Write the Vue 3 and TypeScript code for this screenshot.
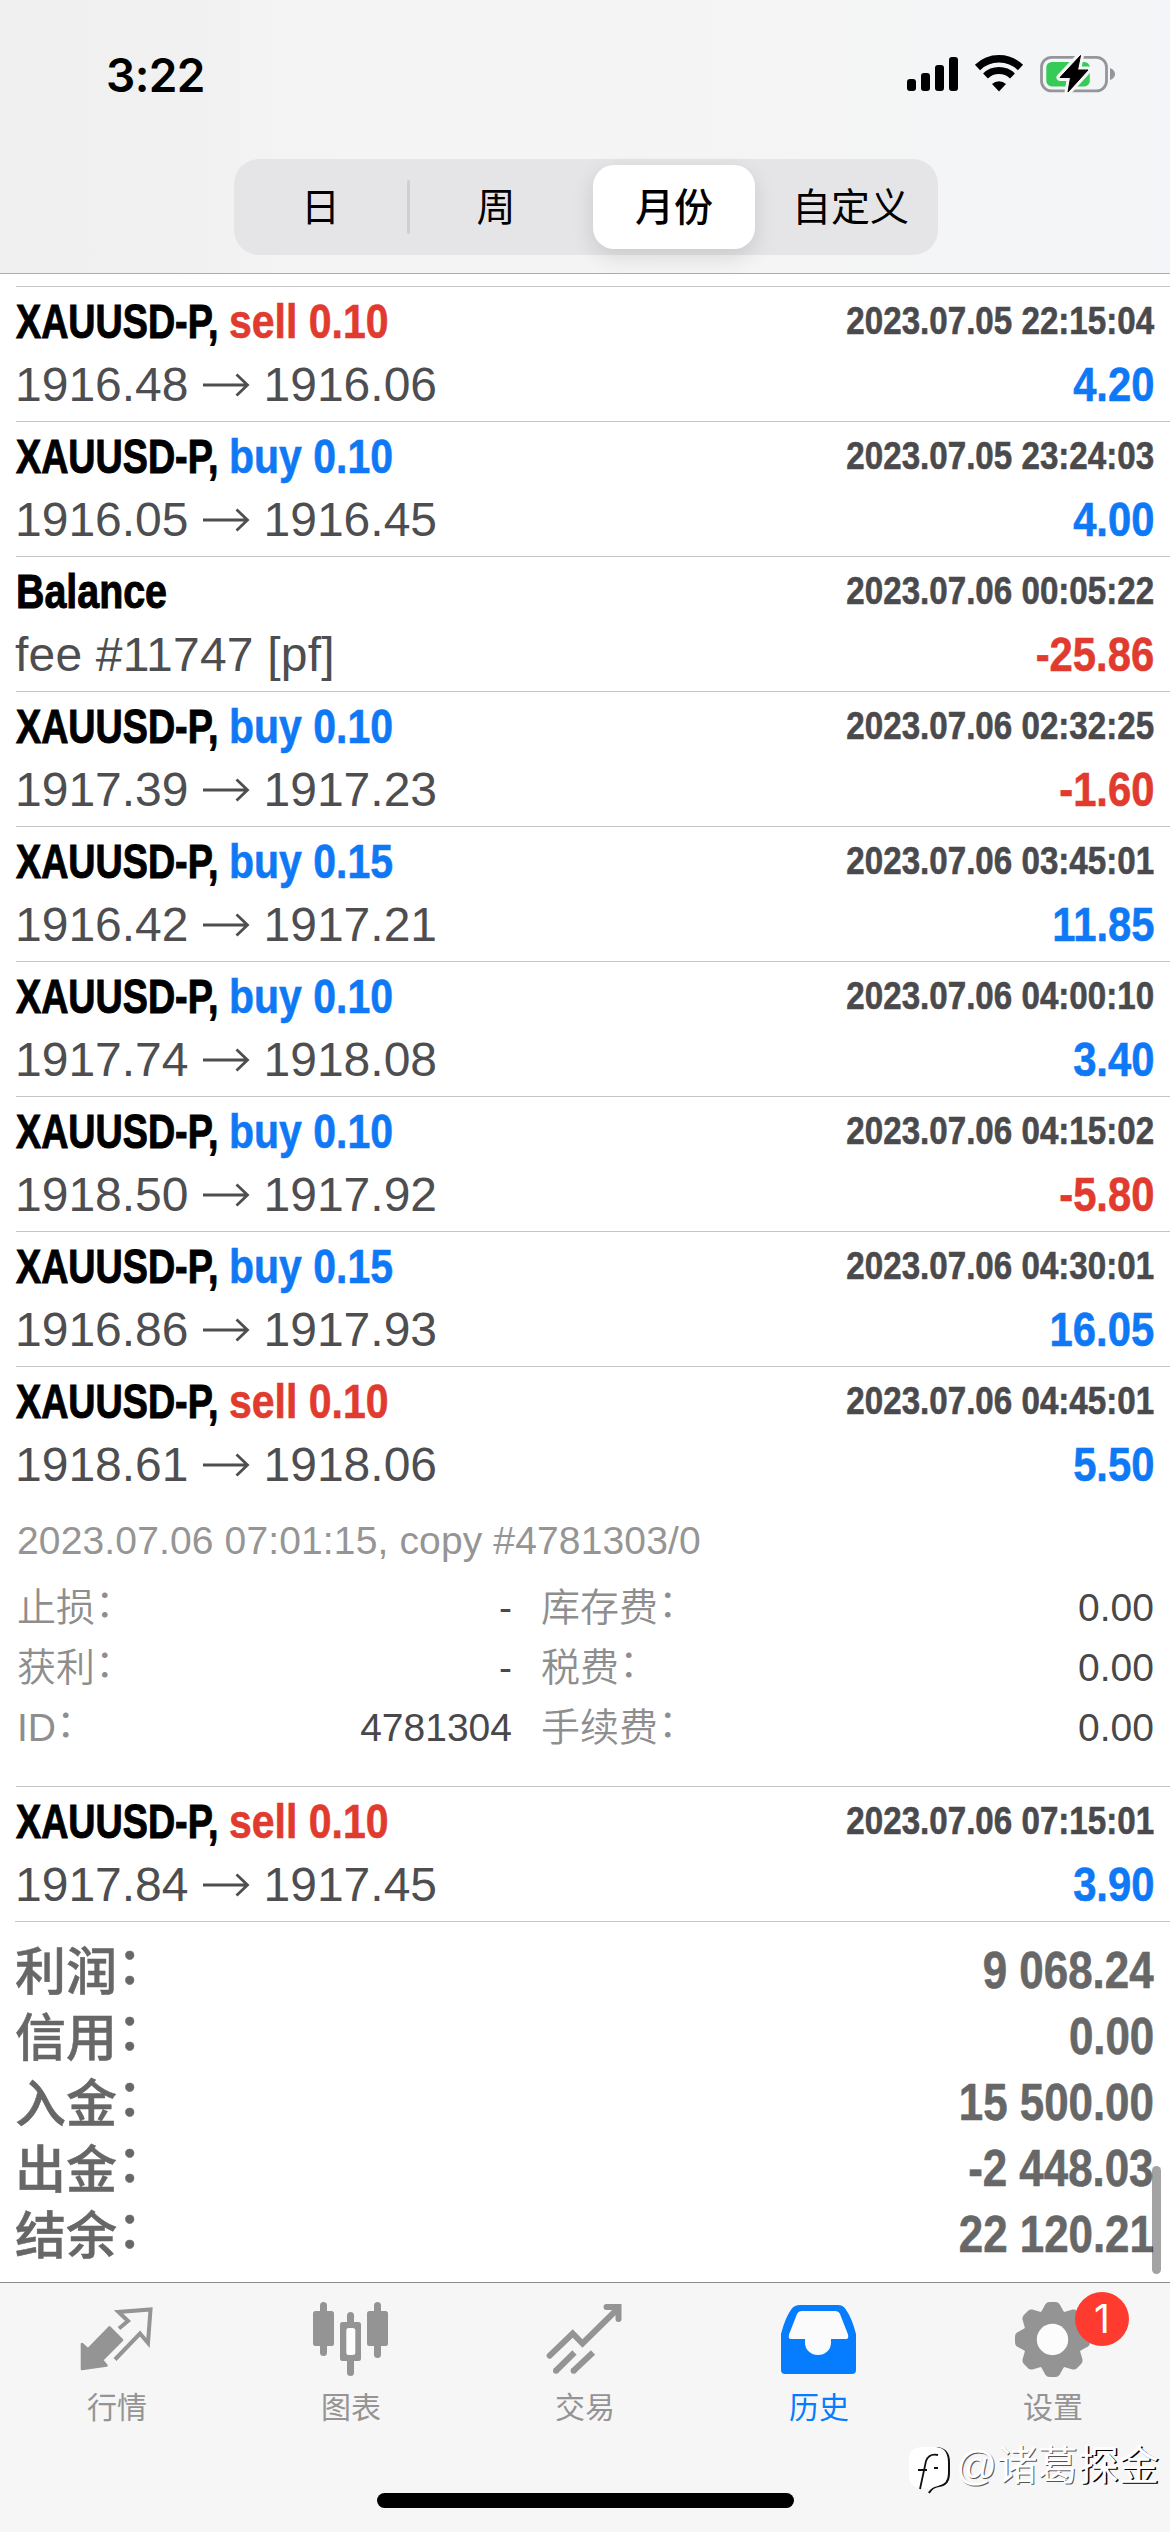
<script setup lang="ts">
type Side = 'buy' | 'sell'

interface Detail {
  note: string
  cells: { label: string; value: string }[]
}

interface Deal {
  symbol: string
  side?: Side
  volume?: string
  time: string
  open?: string
  close?: string
  comment?: string
  profit: string
  detail?: Detail
}

const periods = ['日', '周', '月份', '自定义']
const activePeriod = '月份'

const trade = (side: Side, volume: string, time: string, open: string, close: string, profit: string, detail?: Detail): Deal => ({
  symbol: 'XAUUSD-P,', side, volume, time, open, close, profit, detail,
})

const deals: Deal[] = [
  trade('sell', '0.10', '2023.07.05 22:15:04', '1916.48', '1916.06', '4.20'),
  trade('buy', '0.10', '2023.07.05 23:24:03', '1916.05', '1916.45', '4.00'),
  { symbol: 'Balance', time: '2023.07.06 00:05:22', comment: 'fee #11747 [pf]', profit: '-25.86' },
  trade('buy', '0.10', '2023.07.06 02:32:25', '1917.39', '1917.23', '-1.60'),
  trade('buy', '0.15', '2023.07.06 03:45:01', '1916.42', '1917.21', '11.85'),
  trade('buy', '0.10', '2023.07.06 04:00:10', '1917.74', '1918.08', '3.40'),
  trade('buy', '0.10', '2023.07.06 04:15:02', '1918.50', '1917.92', '-5.80'),
  trade('buy', '0.15', '2023.07.06 04:30:01', '1916.86', '1917.93', '16.05'),
  trade('sell', '0.10', '2023.07.06 04:45:01', '1918.61', '1918.06', '5.50', {
    note: '2023.07.06 07:01:15, copy #4781303/0',
    cells: [
      { label: '止损', value: '-' },
      { label: '库存费', value: '0.00' },
      { label: '获利', value: '-' },
      { label: '税费', value: '0.00' },
      { label: 'ID', value: '4781304' },
      { label: '手续费', value: '0.00' },
    ],
  }),
  trade('sell', '0.10', '2023.07.06 07:15:01', '1917.84', '1917.45', '3.90'),
]

const totals = [
  { label: '利润', value: '9 068.24' },
  { label: '信用', value: '0.00' },
  { label: '入金', value: '15 500.00' },
  { label: '出金', value: '-2 448.03' },
  { label: '结余', value: '22 120.21' },
]

const tabs = [
  { id: 'quotes', label: '行情' },
  { id: 'chart', label: '图表' },
  { id: 'trade', label: '交易' },
  { id: 'history', label: '历史' },
  { id: 'settings', label: '设置' },
]
const activeTab = 'history'
const gearTeeth = [0, 45, 90, 135, 180, 225, 270, 315]
</script>

<template>
  <div class="screen">
    <header class="top">
      <div class="status">
        <span class="clock">3:22</span>
        <svg class="status-icons" width="212" height="44" viewBox="0 0 212 44">
          <rect x="3" y="27" width="9" height="12" rx="3" />
          <rect x="17" y="21" width="9" height="18" rx="3" />
          <rect x="31" y="13" width="9" height="26" rx="3" />
          <rect x="45" y="5" width="9" height="34" rx="3" />
          <g fill="none" stroke="#000">
            <path d="M73.500 15.500a31 31 0 0 1 43 0" stroke-width="7.500" />
            <path d="M81.500 24a19.500 19.500 0 0 1 27 0" stroke-width="7" />
          </g>
          <path d="M95 39.500l-7-7.500a10.500 10.500 0 0 1 14 0z" />
          <rect x="137.500" y="5.300" width="65" height="33.600" rx="10" fill="none" stroke="#96969a" stroke-width="2.800" />
          <path d="M206 16q5 2 5 6t-5 6z" fill="#96969a" />
          <rect x="142.300" y="10" width="43.500" height="24.400" rx="5.500" fill="#35cb56" />
          <path d="M176.500 3.500l-20.500 22h10.500l-2.500 14.500 20-22h-10.500z" stroke="#f6f6f7" stroke-width="7" stroke-linejoin="round" />
          <path d="M176.500 3.500l-20.500 22h10.500l-2.500 14.500 20-22h-10.500z" stroke="#000" stroke-width="1" stroke-linejoin="round" />
        </svg>
      </div>
      <nav class="segments">
        <div v-for="p in periods" :key="p" class="segment" :class="{ active: p === activePeriod }">
          <span>{{ p }}</span>
        </div>
      </nav>
    </header>

    <main class="list">
      <article v-for="d in deals" :key="d.time" class="deal">
        <div class="line head">
          <div class="name">
            <span class="symbol cond" :class="{ plain: !d.side }">{{ d.symbol }}</span>
            <span v-if="d.side" class="action cond" :class="d.side">{{ d.side }} {{ d.volume }}</span>
          </div>
          <span class="time cond">{{ d.time }}</span>
        </div>
        <div class="line body">
          <span v-if="d.comment" class="prices comment">{{ d.comment }}</span>
          <span v-else class="prices">
            <span>{{ d.open }}</span>
            <svg class="arrow" width="48" height="24" viewBox="0 0 48 24">
              <path d="M1 12H45M34.500 1.500L45.500 12L34.500 22.500" fill="none" stroke="currentColor" stroke-width="2.800" />
            </svg>
            <span>{{ d.close }}</span>
          </span>
          <span class="profit cond" :class="d.profit.startsWith('-') ? 'sell' : 'buy'">{{ d.profit }}</span>
        </div>
        <div v-if="d.detail" class="detail">
          <p class="note">{{ d.detail.note }}</p>
          <dl class="cells">
            <div v-for="c in d.detail.cells" :key="c.label" class="cell">
              <dt>{{ c.label }}<span class="colon">：</span></dt>
              <dd>{{ c.value }}</dd>
            </div>
          </dl>
        </div>
      </article>

      <dl class="totals">
        <div v-for="t in totals" :key="t.label" class="total">
          <dt>{{ t.label }}<span class="colon">：</span></dt>
          <dd class="cond">{{ t.value }}</dd>
        </div>
      </dl>
      <div class="scrollbar"></div>
    </main>

    <footer class="tabbar">
      <nav class="tabs">
        <div v-for="t in tabs" :key="t.id" class="tab" :class="{ active: t.id === activeTab }">
          <svg v-if="t.id === 'quotes'" class="icon" viewBox="66.500 24 100 84">
            <path d="M118.500 58.500L127.500 51L118 42L150 39.500L147.500 73L139.500 63.500L114.500 89.500" fill="none" stroke="currentColor" stroke-width="4" />
            <path d="M109 57.500L121.500 70L101.500 90L106 95.500L81.500 99V74L87.500 79.500Z" fill="currentColor" stroke="currentColor" stroke-width="2.600" stroke-linejoin="round" />
          </svg>
          <svg v-else-if="t.id === 'chart'" class="icon" viewBox="301 24 100 84">
            <g fill="currentColor">
              <rect x="320" y="32" width="7" height="54" rx="3.500" />
              <rect x="313" y="41" width="21" height="35" rx="2.500" />
              <rect x="374" y="32" width="7" height="56" rx="3.500" />
              <rect x="367" y="41" width="21" height="35" rx="2.500" />
              <rect x="347" y="42" width="7" height="64" rx="3.500" />
              <rect x="340" y="52" width="21" height="39" rx="2.500" />
            </g>
            <rect x="346.300" y="58" width="9" height="27" rx="2.500" fill="#fdfdfd" />
          </svg>
          <svg v-else-if="t.id === 'trade'" class="icon" viewBox="535 24 100 84">
            <g fill="none" stroke="currentColor" stroke-width="6">
              <path d="M549.700 85.700L572.700 63.500L582.500 73.500L618 38.500" stroke-linejoin="miter" stroke-linecap="round" />
              <path d="M606.500 37H618.500V49" stroke-linejoin="miter" stroke-linecap="round" />
              <path d="M555.700 101L574.500 82.500" />
              <path d="M573.300 101L593 82.500" />
            </g>
            <circle cx="556" cy="100.700" r="3" fill="currentColor" />
            <circle cx="573.600" cy="100.700" r="3" fill="currentColor" />
          </svg>
          <svg v-else-if="t.id === 'history'" class="icon" viewBox="769 24 100 84">
            <path d="M800 35H838Q843 35 845.500 39Q852 48 856 64V100Q856 104 852 104H785Q781 104 781 100V64Q785 48 791.500 39Q794.500 35 800 35Z" fill="currentColor" />
            <path d="M802 41H835Q838.500 41 840 44L848 64.500Q849 69 846 69H831V73A13 12 0 0 1 805 73V69H791Q788 69 789 64.500L797 44Q798.500 41 802 41Z" fill="#fbfbfb" />
          </svg>
          <svg v-else class="icon" viewBox="1003 24 100 84">
            <circle cx="1052.500" cy="69.500" r="30" fill="currentColor" />
            <path v-for="a in gearTeeth" :key="a" d="M1040 44L1045.500 34Q1047 32 1049.500 32H1055.500Q1058 32 1059.500 34L1065 44Z" fill="currentColor" :transform="`rotate(${a} 1052.5 69.5)`" />
            <circle cx="1052.500" cy="69.500" r="15.700" fill="#fcfcfc" />
          </svg>
          <span v-if="t.id === 'settings'" class="badge">1</span>
          <span class="tab-label">{{ t.label }}</span>
        </div>
      </nav>
      <div class="home"></div>
      <div class="mark">
        <svg width="46" height="48" viewBox="0 0 46 48">
          <path d="M13 2H30Q41 4 41 16V27Q41 39 31 40Q24 41 21 47" fill="none" stroke="#111" stroke-width="2" />
          <path d="M13 1H28Q39.500 2 39.500 14V27Q39.500 38 30 40Q24 41 21 45L20 42H13Q1 41 1 29V13Q1 2 13 1Z" fill="#fff" />
          <path d="M30 9Q21 7 18 15L12 43M10 24H19M26 22H30" fill="none" stroke="#111" stroke-width="1.800" />
        </svg>
        <span>@诸葛<b>探金</b></span>
      </div>
    </footer>
  </div>
</template>

<style>
body {
  margin: 0;
  background: #fff;
}
</style>

<style scoped>
.screen {
  width: 1170px;
  height: 2532px;
  display: flex;
  flex-direction: column;
  overflow: hidden;
  background: #fff;
  font-family: "Liberation Sans", "Noto Sans CJK SC", sans-serif;
}
.top {
  flex: none;
  box-sizing: border-box;
  height: 274px;
  border-bottom: 1px solid #adadad;
  background: linear-gradient(90deg, #f0f0f0 0, #f2f1f2 200px, #f5f4f4 300px, #f5f5f5 800px, #f4f5f8 100%);
}
.status {
  height: 159px;
  display: flex;
  justify-content: space-between;
  align-items: flex-start;
  padding: 0 54px 0 106px;
  box-sizing: border-box;
}
.clock {
  font: 600 46px/56px Inter, sans-serif;
  letter-spacing: -0.6px;
  margin-top: 47px;
}
.status-icons {
  margin-top: 52px;
}
.segments {
  width: 704px;
  height: 96px;
  margin-left: 234px;
  display: grid;
  grid-template-columns: 173px 178px 178px 175px;
  border-radius: 25px;
  background: #e5e5e7;
}
.segment {
  position: relative;
  display: flex;
  align-items: center;
  justify-content: center;
  font: 400 39px/56px "Noto Sans CJK SC", sans-serif;
}
.segment span {
  padding-bottom: 6px;
}
.segment:first-child::after {
  content: "";
  position: absolute;
  right: -3px;
  top: 21px;
  width: 3px;
  height: 54px;
  border-radius: 2px;
  background: #d0d0d2;
}
.segment.active span {
  width: 162px;
  line-height: 78px;
  text-align: center;
  font-weight: 500;
  border-radius: 21px;
  background: #fff;
  box-shadow: 0 8px 22px rgba(0, 0, 0, 0.12);
}
.list {
  flex: 1;
  position: relative;
  padding-top: 12px;
  min-height: 0;
}
.deal {
  margin-left: 16px;
  border-top: 1px solid #c4c4c6;
  padding: 0 16px 8px 0;
}
.line {
  display: flex;
  justify-content: space-between;
  white-space: nowrap;
}
.head {
  height: 70px;
  line-height: 70px;
}
.body {
  height: 56px;
  line-height: 56px;
}
.cond {
  display: block;
  font-weight: 700;
  -webkit-text-stroke: 0.6px currentColor;
}
.name {
  display: flex;
  font-size: 48px;
}
.symbol {
  width: 213px;
  transform: scaleX(0.785);
  transform-origin: 0 0;
  -webkit-text-stroke-width: 1px;
}
.symbol.plain {
  transform: scaleX(0.82);
}
.action {
  transform: scaleX(0.854);
  transform-origin: 0 0;
}
.time {
  font-size: 39px;
  line-height: 67px;
  color: #4a4a4d;
  transform: scaleX(0.85);
  transform-origin: 100% 0;
}
.prices {
  display: flex;
  align-items: center;
  font-size: 48px;
  color: #4e4e51;
  margin-left: -1px;
}
.comment {
  letter-spacing: 0.2px;
}
.arrow {
  margin: 0 14px 0 13px;
}
.profit {
  font-size: 48px;
  transform: scaleX(0.87);
  transform-origin: 100% 0;
}
.buy {
  color: #0f79f5;
}
.sell {
  color: #e13a2e;
}
.detail {
  height: 285px;
  font-size: 39px;
}
.note {
  margin: 0 0 0 1px;
  padding-top: 16px;
  line-height: 64px;
  letter-spacing: 0.14px;
  color: #959595;
}
.cells {
  margin: 5px 0 0 1px;
  display: grid;
  grid-template-columns: 495px 613px;
  column-gap: 29px;
}
.cell {
  display: flex;
  justify-content: space-between;
  height: 60px;
  line-height: 60px;
}
.cell dt {
  color: #8e8e8e;
  font-weight: 350;
}
.cell dd {
  margin: 0;
  color: #48484a;
}
.colon {
  display: inline-block;
  transform: translateY(-0.11em);
}
.totals {
  margin: 0 0 0 15px;
  padding: 16px 16px 0 0;
  border-top: 1px solid #c4c4c6;
}
.total {
  height: 66px;
  line-height: 66px;
  display: flex;
  justify-content: space-between;
  font-size: 51px;
  color: #676767;
}
.total dt {
  font-family: "Noto Sans CJK SC", sans-serif;
  font-weight: 500;
  line-height: 60px;
  -webkit-text-stroke: 0.5px currentColor;
}
.total dd {
  margin: 0;
  transform: scaleX(0.86);
  transform-origin: 100% 0;
}
.scrollbar {
  position: absolute;
  right: 9px;
  bottom: 8px;
  width: 9px;
  height: 108px;
  border-radius: 5px;
  background: rgba(0, 0, 0, 0.36);
}
.tabbar {
  flex: none;
  position: relative;
  box-sizing: border-box;
  height: 250px;
  border-top: 1px solid #8c8c8c;
  background: #f6f6f6;
}
.tabs {
  height: 210px;
  display: grid;
  grid-template-columns: repeat(5, 1fr);
}
.tab {
  position: relative;
  display: flex;
  flex-direction: column;
  align-items: center;
  color: #949494;
}
.tab.active {
  color: #067cff;
}
.icon {
  width: 100px;
  height: 84px;
  margin-top: 11px;
}
.tab-label {
  margin-top: 7px;
  font: 400 30px/40px "Noto Sans CJK SC", sans-serif;
}
.badge {
  position: absolute;
  left: 139px;
  top: 9px;
  width: 54px;
  height: 54px;
  border-radius: 50%;
  background: #ff3b30;
  color: #fff;
  font: 400 39px/54px Inter, sans-serif;
  text-align: center;
}
.home {
  width: 417px;
  height: 15px;
  margin-left: 377px;
  border-radius: 8px;
  background: #000;
}
.mark {
  position: absolute;
  left: 908px;
  top: 163px;
  display: flex;
  align-items: flex-start;
  font: 400 40.500px/40px "Liberation Sans", "Noto Sans CJK SC", sans-serif;
  color: #fff;
  white-space: nowrap;
  text-shadow: 1px 1px 0.500px #555;
}
.mark b {
  font-weight: 400;
  text-shadow: 1.500px 1px 0.500px #000;
}
.mark svg {
  margin-right: 2px;
}
</style>
